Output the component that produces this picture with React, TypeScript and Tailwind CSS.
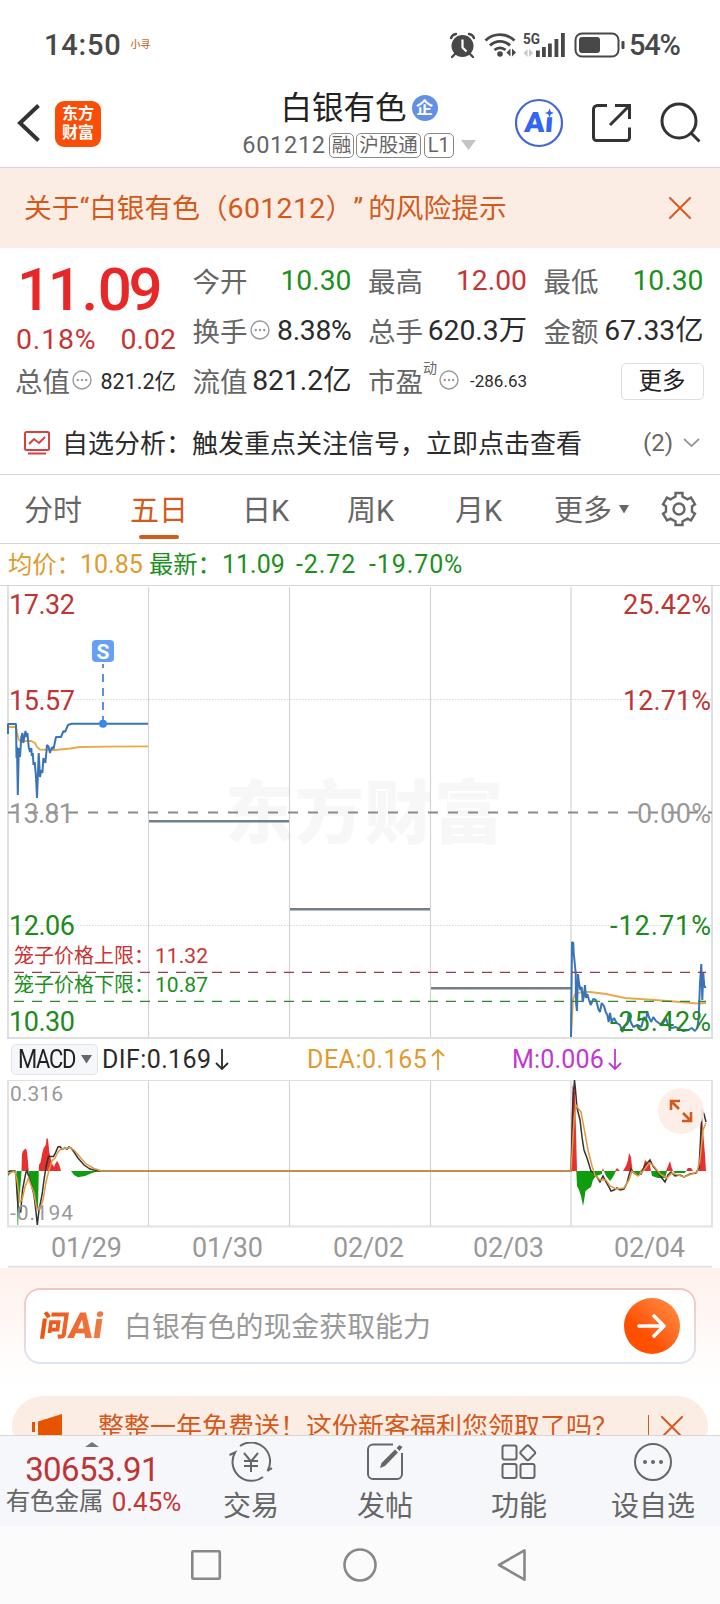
import type { ReactNode } from 'react';

const DAY_LINES = [148.5, 289.5, 430.5, 571];

const PRICE_FIRST =
    '8,734 8,724 16,724 16.5,758 17,747 17.8,795 18.8,748 20,757 21.3,737 22.4,733 23.3,743 25.5,731 26.7,737 27.4,733 28.7,747 30,752 31.3,748 31.8,756 32.8,753 33.5,765 34.7,762 36,777 37,798 38.7,753 40,777 41.3,770 42.4,773 43.4,758 45.4,763 47,745 48.7,747 50,753 52,747 53.5,749 56,737 61,737 63.5,731 65,732 68,725 71.5,723.7 148,723.7';
const AVG_FIRST = '8,727 16,727 17,732 18.5,739 20,741 31,741 35,743 37,747 40,749.5 55,750 70,748.5 80,747 105,746.7 148,746.3';
const PRICE_LAST =
    '571,1037 572,942 573.3,943 573.7,953 574.7,963 575.7,973 576,1003 577,1011 578,974 579,983 580.3,990 581.7,987 582.7,1002 583.7,997 585,985 586,998 587.3,994 589,1000 590.7,1005 593.3,999 596,1000 598.7,1010 600,1012 601.7,1003 604,1006 605.7,1012 607.3,1015 608.7,1022 610,1013 611.7,1022 614,1018 616.7,1023 620,1025 622.3,1032 625,1026 627.3,1024 628.7,1013 630.7,1022 633.3,1027 637.3,1025 641.3,1027 644,1017 646,1020 647.3,1012 649.3,1018 651.3,1022 653.3,1017 656,1021 660,1024 663.3,1023 666,1018 668,1025 671.7,1028 676,1027 679.3,1029 683.3,1031 688.3,1030 691.7,1028 695,1031 697.3,1028 698.7,1018 700,983 701.3,964 702.3,1000 703.3,973 704.3,987 706,987';
const AVG_LAST = '571,1037 573,1000 575,994 582,992 590,992 606,994 625,998 655,1000 680,1002 697,1003.5 706,1003';

const DIF_LINE =
    '8,1172 10,1171 15,1171 16,1175 17,1193 18.3,1211 20.7,1212 22.5,1190 24,1182 26,1172 27,1171 29,1177 32,1187 34,1195 36,1212 37.3,1225 39,1210 42,1195 44,1180 46,1167 48.5,1156.5 53.5,1156.5 55,1154 58,1147 60,1146.5 62,1149 65,1148 67,1149 69,1147 71,1148 74,1152 78,1158 84,1165 90,1169 98,1171 571,1171 573,1100 574.5,1080 575.5,1090 577,1108 580,1120 582,1137 584,1150 587,1158 591,1171 594,1173 597,1177 600,1182 603,1176 606,1182 609,1187 611,1191 614,1190 617,1188 620,1190 624,1189 627,1183 629,1175 631,1169 634,1173 637,1175 641,1174 645,1165 648,1163 650,1160 653,1166 657,1171 661,1177 665,1182 668,1175 671,1172 675,1176 680,1175 684,1177 690,1174 696,1173 699,1168 700.5,1140 702,1110 704,1114 706,1122';
const DEA_LINE =
    '8,1173 15,1171.5 17,1180 20,1202 22,1200 25,1187 28.5,1178 31,1185 34,1193 37,1210 40,1209 43,1200 46,1182 49,1170 52,1161 55,1158 58,1152 61,1149 65,1148.5 70,1147.5 74,1150 80,1157 86,1164 94,1168.5 102,1171 571,1171 574,1120 576,1105 578,1108 581,1112 584,1128 588,1150 592,1166 595,1175 600,1180 606,1180 610,1186 616,1189 624,1188 629,1180 632,1171 638,1176 644,1170 649,1163 653,1165 660,1174 667,1178 672,1173 684,1177 697,1172 700,1160 703,1130 706,1123';

const RED_BARS = [
    '21.5,1171 22,1154 23,1151 25,1149 26,1148.5 27,1152 28,1162 28.7,1171',
    '38.7,1171 39,1165 40.7,1162 42.3,1153 43.7,1148 45.7,1145 46.7,1138 48,1139 49.3,1152 51.7,1163 54,1167 55.7,1163 57.3,1161 59.3,1165 61,1171',
    '571,1171 571.5,1120 572.5,1085 575,1092 577,1171',
    '602,1171 603,1168 604,1171',
    '615,1171 617,1168 620,1171',
    '623,1171 626,1166 628,1160 629,1153 631,1157 632.5,1171',
    '640,1171 643,1168 645,1160 647,1162 649,1160 651,1171',
    '666,1171 668,1166 670,1161 671.5,1167 673,1171',
    '686,1171 688,1168 691,1168 693,1171',
    '698.5,1171 700,1150 701.5,1108 703,1130 705,1155 706,1171',
];
const GREEN_BARS = [
    '8,1171 8,1176 10,1174 13,1171',
    '16.5,1171 17,1195 17.5,1225 18.2,1225 18.7,1198 20,1193 21.5,1171',
    '28.3,1171 29,1176 31,1183 33,1190 35,1200 37,1209 38,1208 38.8,1171',
    '71,1171 74,1175 78,1177.3 85,1176 92,1173 99,1171',
    '576.3,1171 577,1186 579,1190 581,1196 583,1206 584,1201 585.5,1191 588,1189 591,1187 593,1180 596,1176 602,1174 602,1171',
    '604,1171 606,1176 610,1181 613,1177 616,1171',
    '633,1171 635,1175 639,1175 641,1171',
    '651,1171 652,1176 658,1178 665,1178 667,1171',
    '673,1171 675,1173 685,1173 686,1171',
];

function MoreDots() {
    return (
        <svg width="20" height="20" viewBox="0 0 20 20" fill="#999" className="ml-[2px] shrink-0">
            <circle cx="10" cy="10" r="9" fill="none" stroke="#999" strokeWidth="1.4" />
            <circle cx="5.8" cy="10" r="1.200" />
            <circle cx="10" cy="10" r="1.200" />
            <circle cx="14.2" cy="10" r="1.200" />
        </svg>
    );
}

function Close() {
    return (
        <svg width="22" height="22" viewBox="0 0 22 22" stroke="#d45a1c" strokeWidth="2" strokeLinecap="round">
            <path d="M1 1 21 21M21 1 1 21" />
        </svg>
    );
}

function Quote({ label, dots, sup, children, color = 'text-[#2b2b2b]', size = 'text-[28.300px]' }: { label: string; dots?: boolean; sup?: string; children: ReactNode; color?: string; size?: string }) {
    return (
        <div className="flex h-[50px] items-center justify-between whitespace-nowrap">
            <div className="-ml-px flex items-center text-[27.500px] text-[#666]">
                <span className="pt-[5px]">{label}</span>
                {sup && <span className="mb-[25px] text-[14px]">{sup}</span>}
                {dots && <MoreDots />}
            </div>
            <span className={`pt-[3px] ${size} ${color}`}>{children}</span>
        </div>
    );
}

function StatusBar() {
    return (
        <div className="flex h-[84px] items-center pt-[6px] pl-[44px] pr-[38px] text-[#484848]">
            <span className="text-[29px] font-medium tracking-[0.800px]">14:50</span>
            <span className="ml-[9px] text-[10px] font-medium text-[#c8733c]">小寻</span>
            <svg className="ml-auto" width="179" height="28" viewBox="449 30 179 28" fill="#484848">
                <circle cx="462.500" cy="45" r="11" />
                <path d="M451 37a6 6 0 0 1 5-4M474 37a6 6 0 0 0-5-4M455 53l-3 3M470 53l3 3" stroke="#484848" strokeWidth="2.400" fill="none" strokeLinecap="round" />
                <path d="M462.500 38.500v8l4 4" stroke="#fff" strokeWidth="2.200" fill="none" />
                <path d="M485.500 39.500a21 21 0 0 1 29 0M490 44.500a14 14 0 0 1 20 0M494.500 49a8 8 0 0 1 11 0" stroke="#484848" strokeWidth="2.800" fill="none" />
                <circle cx="500" cy="53" r="2.800" />
                <path d="M506.500 51.500l4-4v8zM512 47.500v8l4-4z" />
                <text x="523" y="43" fontSize="15" fontWeight="700" textLength="17" lengthAdjust="spacingAndGlyphs">5G</text>
                <path d="M523.500 52l4-4v8zM529 48v8l4-4z" fill="#c8c8c8" />
                <path d="M536 49.500h3.800v6.500h-3.800zM542 46h3.800v10h-3.800zM548 42.500h3.800v13.500h-3.800zM554.500 38h3.800v18h-3.800zM561 32h3.800v24h-3.800z" />
                <rect x="575.500" y="32.500" width="43" height="23" rx="6.500" fill="none" stroke="#484848" strokeWidth="2" />
                <rect x="579" y="36" width="21" height="16" rx="3" />
                <rect x="621.500" y="40" width="3" height="8" rx="1" />
            </svg>
            <span className="w-[54px] whitespace-nowrap pl-px text-[29px] font-medium tracking-[-1.200px]">54%</span>
        </div>
    );
}

function Header() {
    return (
        <header className="flex h-[84px] items-center border-b border-[#d6d6d6] pl-[17px] pr-[19px]">
            <svg width="24" height="38" viewBox="0 0 24 38" fill="none" stroke="#333" strokeWidth="4" className="mt-[-5px]">
                <path d="M21.500 1.500 3 19 21.500 36.500" />
            </svg>
            <div className="ml-[14px] mt-[-4px] flex size-[46px] flex-col items-center justify-center rounded-[9px] bg-[#fa4d08] pb-px text-[16px] font-bold leading-[19px] text-white">
                <span>东方</span>
                <span>财富</span>
            </div>
            <div className="ml-[141px] flex w-[234px] flex-col items-center">
                <div className="flex items-center text-[31.500px] text-[#222]">
                    白银有色
                    <span className="mb-[3px] ml-[5px] flex size-[26px] items-center justify-center rounded-full bg-[#6490e4] pt-px text-[17px] font-bold text-white">企</span>
                </div>
                <div className="mt-[8px] flex items-center whitespace-nowrap text-[#666]">
                    <span className="text-[23.500px] tracking-[0.700px]">601212</span>
                    <span className="ml-[3px] flex h-[25px] items-center rounded-[5px] border border-[#888] px-[2px] text-[19.500px]">融</span>
                    <span className="ml-[2px] flex h-[25px] items-center rounded-[5px] border border-[#888] px-[2px] text-[19.500px]">沪股通</span>
                    <span className="ml-[3px] flex h-[25px] items-center rounded-[5px] border border-[#888] px-[3px] text-[20px]">L1</span>
                    <svg width="15" height="10" viewBox="0 0 15 10" className="ml-[7px]">
                        <path d="M0 0h15L7.500 10z" fill="#c4c4c4" />
                    </svg>
                </div>
            </div>
            <svg width="186" height="50" viewBox="515 98 186 50" fill="none" stroke="#333" strokeWidth="3" className="ml-auto mt-[-5px] shrink-0">
                <circle cx="539" cy="123" r="23" stroke="#4266d8" strokeWidth="2.200" />
                <text x="524" y="132.500" fontSize="28" fontWeight="900" fill="#3366f0" stroke="none" transform="skewX(-4) translate(9 0)" textLength="29" lengthAdjust="spacingAndGlyphs">Aı</text>
                <path d="M549.500 108.500l1.300 3.200 3.200 1.300-3.200 1.300-1.300 3.200-1.300-3.200-3.200-1.300 3.200-1.300z" fill="#3366f0" stroke="none" />
                <path d="M607 105.500h-9.500a4 4 0 0 0-4 4v28a3 3 0 0 0 3 3h30a3 3 0 0 0 3-3v-10M610 125l19-19M615 105.500h14.500v13.500" />
                <circle cx="679" cy="121" r="17" />
                <path d="M690.500 132.500l9 9" />
            </svg>
        </header>
    );
}

function Quotes() {
    return (
        <section className="grid h-[158px] grid-cols-[160px_158px_158px_159px] gap-x-[17.500px] pl-[16px] pt-[7px]">
            <div>
                <div className="flex h-[64px] items-center pl-px pt-[5px] text-[60px] font-medium tracking-[-3.400px] text-[#e82828]">
                    11<span className="mx-[3px]">.</span>09
                </div>
                <div className="flex h-[36px] items-center justify-between pt-[6px] text-[28.500px] text-[#c83434]">
                    <span className="tracking-[0.800px]">0.18%</span>
                    <span>0.02</span>
                </div>
                <Quote label="总值" dots size="text-[21.500px]">821.2亿</Quote>
            </div>
            <div>
                <Quote label="今开" color="text-[#1c901c]">10.30</Quote>
                <Quote label="换手" dots>
                    <span className="tracking-[-0.300px]">8.38%</span>
                </Quote>
                <Quote label="流值">821.2亿</Quote>
            </div>
            <div>
                <Quote label="最高" color="text-[#c83434]">12.00</Quote>
                <Quote label="总手">620.3万</Quote>
                <Quote label="市盈" sup="动" dots size="text-[17px]">-286.63</Quote>
            </div>
            <div>
                <Quote label="最低" color="text-[#1c901c]">10.30</Quote>
                <Quote label="金额">67.33亿</Quote>
                <div className="flex h-[50px] items-center justify-end pt-[2px]">
                    <button className="h-[37px] w-[83px] rounded-[5px] border border-[#ddd] pt-px text-[23.500px] leading-none text-[#222]">更多</button>
                </div>
            </div>
        </section>
    );
}

function Tabs() {
    return (
        <nav className="flex h-[69px] items-center border-b border-[#d6d6d6] pl-[24px] pr-[23px] text-[29px] text-[#666]">
            <span className="w-[106px] pt-[4px]">分时</span>
            <span className="relative w-[112px] pt-[4px] text-[#d45a1c]">
                五日
                <i className="absolute left-[9px] top-[42px] h-1 w-[40px] rounded-full bg-[#d45a1c]" />
            </span>
            <span className="w-[105px] pt-[4px]">日K</span>
            <span className="w-[108px] pt-[4px]">周K</span>
            <span className="w-[99px] pt-[4px]">月K</span>
            <span className="pt-[4px]">更多</span>
            <svg width="10" height="9" viewBox="0 0 10 9" className="ml-[7px]">
                <path d="M0 0h10L5 8.500z" fill="#666" />
            </svg>
            <svg width="36" height="36" viewBox="-18 -18 36 36" fill="none" stroke="#666" strokeWidth="2.400" className="ml-auto">
                <path d="M-3.500-16h7v3.500l5 2.800 3.500-1.700 4 6.700-3 2v5.400l3 2-4 6.700-3.500-1.700-5 2.800V16h-7v-3.500l-5-2.800-3.500 1.700-4-6.700 3-2v-5.400l-3-2 4-6.700 3.500 1.700 5-2.800z" />
                <circle r="5.500" />
            </svg>
        </nav>
    );
}

function PriceChart() {
    return (
        <svg width="720" height="453" viewBox="0 586 720 453" fill="none" className="block">
            <text x="225" y="838" fontSize="69" fontWeight="900" fill="#f7f7f7" textLength="278">东方财富</text>
            <path d="M8 586v452M712 586v452" stroke="#e0e0e0" strokeWidth="2" />
            {DAY_LINES.map((x) => (
                <path key={x} d={`M${x} 587v450`} stroke="#d4d4d4" strokeWidth="1.200" />
            ))}
            <path d="M8 699.500h704M8 925.500h704" stroke="#d8d8d8" strokeDasharray="1.500 1.500" />
            <path d="M7 1038h706" stroke="#d4d4d4" strokeWidth="1.600" />
            <path d="M8 812.500h704" stroke="#8a8a8a" strokeWidth="1.800" strokeDasharray="10 10" />
            <path d="M149 821.300h140M290 909.300h140M431 988.300h140" stroke="#72808c" strokeWidth="2.400" />
            <g fontSize="27" fill="#999">
                <text x="9" y="822.500" textLength="65">13.81</text>
                <text x="637" y="822.500" textLength="74">0.00%</text>
            </g>
            <g fontSize="27" fill="#c03434">
                <text x="9" y="613.700" textLength="66">17.32</text>
                <text x="9" y="709.500" textLength="66">15.57</text>
                <text x="623" y="613.700" textLength="88">25.42%</text>
                <text x="623" y="709.500" textLength="88">12.71%</text>
            </g>
            <g strokeWidth="1.800" stroke="#e9a84a">
                <polyline points={AVG_FIRST} />
                <polyline points={AVG_LAST} />
            </g>
            <g strokeWidth="2" stroke="#3a74b8" strokeLinejoin="bevel">
                <polyline points={PRICE_FIRST} />
                <polyline points={PRICE_LAST} />
            </g>
            <path d="M14 972.400h692" stroke="#9c3c44" strokeWidth="1.200" strokeDasharray="10 8" />
            <path d="M14 1001.400h692" stroke="#2e8a2e" strokeWidth="1.200" strokeDasharray="10 8" />
            <g fontSize="27" fill="#1c8a1c">
                <text x="9" y="934.500" textLength="66">12.06</text>
                <text x="9" y="1030.500" textLength="66">10.30</text>
                <text x="610" y="934.500" textLength="101">-12.71%</text>
                <text x="610" y="1030.500" textLength="101">-25.42%</text>
            </g>
            <g fontSize="20">
                <text x="14" y="962.800" fill="#c83434">笼子价格上限：</text>
                <text x="155" y="962.500" fontSize="21" fill="#c83434" textLength="53">11.32</text>
                <text x="14" y="991.800" fill="#1c901c">笼子价格下限：</text>
                <text x="155" y="991.500" fontSize="21" fill="#1c901c" textLength="53">10.87</text>
            </g>
            <path d="M103 664v56" stroke="#5890e4" strokeWidth="2" strokeDasharray="8 6" strokeDashoffset="4" />
            <circle cx="103" cy="723.700" r="4" fill="#3f86ea" />
            <rect x="92" y="640" width="22" height="22" rx="4" fill="#66a0f2" />
            <text x="103" y="658.500" fontSize="21" fontWeight="700" fill="#fff" textAnchor="middle">S</text>
        </svg>
    );
}

function Arrow({ color, up }: { color: string; up?: boolean }) {
    return (
        <svg width="14" height="23" viewBox="0 0 14 23" fill="none" stroke={color} strokeWidth="1.800" className={up ? 'ml-[4px] rotate-180' : 'ml-[4px]'}>
            <path d="M7 1v20M1 15l6 6 6-6" />
        </svg>
    );
}

function MacdBar() {
    return (
        <div className="flex h-[41px] items-center whitespace-nowrap pl-[11px] text-[25px]">
            <div className="flex h-[31px] w-[87px] items-center justify-between rounded-[5px] border border-[#e2e4ea] bg-[#f6f7fa] pl-[6px] pr-[5px] text-[#222]">
                <span className="w-[58px] origin-left scale-x-[.88] text-[25px] tracking-[-1.500px]">MACD</span>
                <svg width="11" height="9" viewBox="0 0 11 9">
                    <path d="M0 0h11L5.500 8.500z" fill="#666" />
                </svg>
            </div>
            <div className="ml-[4px] flex w-[205px] items-center text-[#2b2b2b]">
                <span className="tracking-[0.400px]">DIF:0.169</span>
                <Arrow color="#2b2b2b" />
            </div>
            <div className="flex w-[205px] items-center text-[#e09a30]">
                <span className="tracking-[0.500px]">DEA:0.165</span>
                <Arrow color="#e09a30" up />
            </div>
            <div className="flex items-center text-[#c038d0]">
                <span className="tracking-[0.200px]">M:0.006</span>
                <Arrow color="#c038d0" />
            </div>
        </div>
    );
}

function MacdChart() {
    return (
        <svg width="720" height="188" viewBox="0 1080 720 188" fill="none" className="block">
            <path d="M8 1080.500h704" stroke="#e0e0e0" />
            <path d="M8 1080v147M712 1080v147M7 1226.500h706M8 1266.700h704" stroke="#e2e2e2" strokeWidth="2" />
            {DAY_LINES.map((x) => (
                <path key={x} d={`M${x} 1081v145`} stroke="#d4d4d4" strokeWidth="1.200" />
            ))}
            {GREEN_BARS.map((p) => (
                <polygon key={p} points={p} fill="#0f9c0f" />
            ))}
            {RED_BARS.map((p) => (
                <polygon key={p} points={p} fill="#e83030" />
            ))}
            <polyline points={DIF_LINE} stroke="#333" strokeWidth="1.500" />
            <polyline points={DEA_LINE} stroke="#e09a40" strokeWidth="1.500" />
            <g fontSize="21" fill="#999">
                <text x="10" y="1101" textLength="53">0.316</text>
                <text x="10" y="1220" textLength="63">-0.194</text>
            </g>
            <g fontSize="27" fill="#999">
                <text x="51" y="1256.500" textLength="71">01/29</text>
                <text x="192" y="1256.500" textLength="71">01/30</text>
                <text x="333" y="1256.500" textLength="71">02/02</text>
                <text x="473" y="1256.500" textLength="71">02/03</text>
                <text x="614" y="1256.500" textLength="71">02/04</text>
            </g>
            <circle cx="681" cy="1111" r="23" fill="#fdeee6" opacity=".92" />
            <path d="M679 1109l-8-8M671 1110v-9h9M683 1113l8 8M691 1112v9h-9" stroke="#d45a1c" strokeWidth="2.600" />
        </svg>
    );
}

function AskAi() {
    return (
        <section className="h-[167px] overflow-hidden bg-linear-to-b from-[#fff1ec] to-white to-70% pt-[20px]">
            <div className="mx-[24px] h-[76px] rounded-[16px] bg-linear-to-b from-[#f3c6bf] to-[#e0e4f0] p-[2px]">
                <div className="flex h-full items-center rounded-[14px] bg-white pl-[14px] pr-[14px]">
                    <div className="flex w-[84px] -skew-x-[8deg] items-center bg-linear-to-r from-[#ee5008] to-[#f08850] bg-clip-text text-transparent">
                        <span className="text-[29px] font-black">问</span>
                        <span className="text-[36px] font-black">Ai</span>
                    </div>
                    <span className="pt-[3px] text-[27.900px] text-[#999]">白银有色的现金获取能力</span>
                    <div className="ml-auto flex size-[56px] items-center justify-center rounded-full bg-linear-to-tr from-[#ff5000] from-35% to-[#ff9040]">
                        <svg width="30" height="26" viewBox="0 0 30 26" fill="none" stroke="#fff" strokeWidth="3.600" strokeLinecap="round" strokeLinejoin="round">
                            <path d="M2 13h25M17 3l10 10-10 10" />
                        </svg>
                    </div>
                </div>
            </div>
            <div className="mx-[12px] mt-[32px] flex h-[62px] items-center rounded-full bg-[#fcede4] pl-[20px] pr-[25px] text-[#d45a1c]">
                <svg width="31" height="32" viewBox="0 0 31 32" fill="#e65400" className="mt-[4px]">
                    <path d="M0 9h3v10H0zM6 8.500 30 1v28l-10-3v4H11v-5l-5-2z" />
                </svg>
                <span className="ml-[35px] whitespace-nowrap text-[26px]">整整一年免费送！这份新客福利您领取了吗？</span>
                <i className="ml-auto mr-[12px] h-[25px] w-px bg-[#d45a1c]" />
                <Close />
            </div>
        </section>
    );
}

function NavItem({ label, children }: { label: string; children: ReactNode }) {
    return (
        <div className="flex w-[134px] flex-col items-center pt-[6px]">
            <svg width="44" height="40" viewBox="-22 -20 44 40" fill="none" stroke="#666" strokeWidth="2">
                {children}
            </svg>
            <span className="mt-[11px] text-[28px] text-[#666]">{label}</span>
        </div>
    );
}

function BottomNav() {
    return (
        <div className="flex h-[91px] border-t border-[#d6d6d6] bg-[#f6f7fa]">
            <div className="flex w-[184px] flex-col items-center whitespace-nowrap pt-[6px]">
                <svg width="14" height="5" viewBox="0 0 14 5">
                    <path d="M0 5h14L7 0z" fill="#777" />
                </svg>
                <span className="mt-[6px] text-[33px] tracking-[-0.600px] text-[#c03434]">30653.91</span>
                <div className="mt-[3px] flex items-center pl-[3px] text-[24.500px] text-[#666]">
                    有色金属<span className="ml-[8px] text-[26px] text-[#c83434]">0.45%</span>
                </div>
            </div>
            <NavItem label="交易">
                <path d="M-11-16A19 19 0 0 1 16.500 9l4.500-3M12 15A19 19 0 0 1-16-9.500l-5.500 2.500M-7-9l7 8.500 7-8.500M0-1v11M-7-1H7M-7 4H7" />
            </NavItem>
            <NavItem label="发帖">
                <path d="M8-17.500H-12a5 5 0 0 0-5 5V12a5 5 0 0 0 5 5H12a5 5 0 0 0 5-5V-9" />
                <path d="M-5 6l1.500-5L10-12.500l3 3L0 4zM11.500-14l3-3 3 2-3 4z" fill="#666" stroke="none" />
            </NavItem>
            <NavItem label="功能">
                <rect x="-16.500" y="-16.500" width="14" height="14" rx="2" />
                <rect x="-16.500" y="2" width="14" height="14" rx="2" />
                <rect x="1.500" y="2" width="14" height="14" rx="2" />
                <rect x="3" y="-15" width="11.500" height="11.500" rx="2" transform="rotate(45 8.750 -9.250)" />
            </NavItem>
            <NavItem label="设自选">
                <circle r="18" />
                <g fill="#666" stroke="none">
                    <circle cx="-8" r="2" />
                    <circle r="2" />
                    <circle cx="8" r="2" />
                </g>
            </NavItem>
        </div>
    );
}

export default function App() {
    return (
        <div className='flex h-[1604px] w-[720px] flex-col overflow-hidden bg-white font-[Roboto,"Noto_Sans_CJK_SC",sans-serif] leading-none [text-spacing-trim:space-all]'>
            <StatusBar />
            <Header />
            <div className="flex h-[80px] items-center justify-between bg-[#fcede4] pl-[24px] pr-[29px] text-[27.700px] text-[#d45a1c]">
                <span className="pt-[3px]">
                    关于“白银有色（<span className="text-[28.500px] tracking-[0.300px]">601212</span>）<span className="tracking-[5px]">”</span>的风险提示
                </span>
                <Close />
            </div>
            <Quotes />
            <div className="flex h-[69px] items-center border-b border-[#d6d6d6] pl-[24px] pr-[20px] pt-[5px] text-[26px] text-[#2b2b2b]">
                <svg width="26" height="24" viewBox="0 0 26 24" fill="none" stroke="#d84040" strokeWidth="2">
                    <rect x="1" y="1" width="24" height="18" rx="1.500" />
                    <path d="M5 13l5-5 5 4 6-6M4 22.500h18" />
                </svg>
                <span className="ml-[12px] pt-[3px]">自选分析：触发重点关注信号，立即点击查看</span>
                <span className="ml-auto text-[24px] text-[#666]">(2)</span>
                <svg width="17" height="10" viewBox="0 0 17 10" fill="none" stroke="#999" strokeWidth="1.800" className="ml-[10px]">
                    <path d="M1 1l7.500 7L16 1" />
                </svg>
            </div>
            <Tabs />
            <div className="flex h-[42px] items-center whitespace-nowrap border-b border-[#d6d6d6] pl-[8px] text-[25px] text-[#1c901c]">
                <span className="w-[72px] pt-px text-[24.300px] text-[#e09a30]">均价：</span>
                <span className="w-[69px] text-[#e09a30]">10.85</span>
                <span className="w-[73px] pt-px text-[24.300px]">最新：</span>
                <span className="w-[74px]">11.09</span>
                <span className="w-[73px] tracking-[0.900px]">-2.72</span>
                <span className="tracking-[0.900px]">-19.70%</span>
            </div>
            <PriceChart />
            <MacdBar />
            <MacdChart />
            <AskAi />
            <BottomNav />
            <div className="flex flex-1 items-center justify-center bg-[#fbfbfb]">
                <svg width="340" height="36" viewBox="190 1547 340 36" fill="none" stroke="#888" strokeWidth="2.600" strokeLinejoin="round">
                    <rect x="192.300" y="1551.300" width="27.500" height="27.500" rx="1" />
                    <circle cx="360" cy="1565" r="15.500" />
                    <path d="M499 1565 524.500 1550.300V1579.700z" />
                </svg>
            </div>
        </div>
    );
}
